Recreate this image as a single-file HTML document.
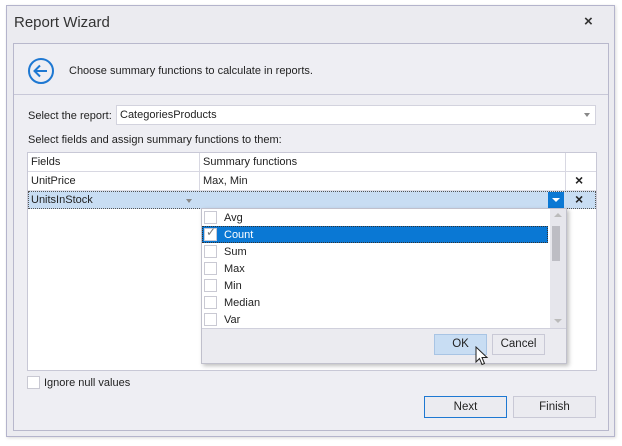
<!DOCTYPE html>
<html><head><meta charset="utf-8"><style>
*{box-sizing:border-box;margin:0;padding:0}
body{width:622px;height:446px;background:#fff;font-family:"Liberation Sans",sans-serif;font-size:11px;color:#222;position:relative;overflow:hidden}
.a{position:absolute}
.win{left:6px;top:5px;width:609px;height:432px;background:#ebebf0;border:1px solid #b4b4cc;box-shadow:1px 1px 3px rgba(0,0,0,.15)}
.panel{left:13px;top:43px;width:596px;height:388px;background:#eeeef3;border:1px solid #b8b8cc}
.cb{width:13px;height:13px;background:#fff;border:1px solid #c9c9d3}
.btn{border:1px solid #c9c9d6;background:#ebebf0;text-align:center;line-height:19px;font-size:11.5px}
</style></head><body>
<div class="a win"></div>
<div class="a" style="left:14px;top:14px;font-size:15px;color:#333">Report Wizard</div>
<div class="a" style="left:584px;top:13px;font-size:15px;font-weight:bold;color:#333">×</div>
<div class="a panel"></div>
<div class="a" style="left:14px;top:94px;width:594px;height:1px;background:#c8c8d8"></div>
<svg class="a" style="left:27px;top:57px" width="28" height="28" viewBox="0 0 28 28"><circle cx="14" cy="14" r="12" fill="none" stroke="#1e78d2" stroke-width="2"/><path d="M20 14H8M13 8.5L7.5 14L13 19.5" fill="none" stroke="#1e78d2" stroke-width="2"/></svg>
<div class="a" style="left:69px;top:65px">Choose summary functions to calculate in reports.</div>
<div class="a" style="left:28px;top:110px">Select the report:</div>
<div class="a" style="left:116px;top:105px;width:480px;height:20px;background:#fff;border:1px solid #d3d3de;padding:3px 3px">CategoriesProducts</div>
<div class="a" style="left:584px;top:113px;border:3.5px solid transparent;border-top:4px solid #888"></div>
<div class="a" style="left:28px;top:134px">Select fields and assign summary functions to them:</div>
<div class="a" style="left:27px;top:152px;width:570px;height:219px;background:#fff;border:1px solid #c8c8d6"></div>
<div class="a" style="left:28px;top:153px;width:568px;height:19px;border-bottom:1px solid #d8d8e2"></div>
<div class="a" style="left:199px;top:153px;width:1px;height:38px;background:#d8d8e2"></div>
<div class="a" style="left:565px;top:153px;width:1px;height:38px;background:#d8d8e2"></div>
<div class="a" style="left:31px;top:156px">Fields</div>
<div class="a" style="left:203px;top:156px">Summary functions</div>
<div class="a" style="left:28px;top:190px;width:568px;height:1px;background:#e0e0e8"></div>
<div class="a" style="left:31px;top:175px">UnitPrice</div>
<div class="a" style="left:203px;top:175px">Max, Min</div>
<div class="a" style="left:575px;top:172px;font-weight:bold;font-size:14px">×</div>
<div class="a" style="left:28px;top:191px;width:568px;height:18px;background:#c8ddf3;border:1px dotted #555"></div>
<div class="a" style="left:31px;top:194px">UnitsInStock</div>
<div class="a" style="left:186px;top:199px;border:3.5px solid transparent;border-top:4px solid #888"></div>
<div class="a" style="left:548px;top:192px;width:16px;height:16px;background:#0a78d4"></div>
<div class="a" style="left:552px;top:198px;border:4px solid transparent;border-top:4px solid #fff"></div>
<div class="a" style="left:575px;top:191px;font-weight:bold;font-size:14px">×</div>
<div class="a" style="left:201px;top:208px;width:366px;height:156px;background:#fff;border:1px solid #c0c0cc;box-shadow:2px 2px 4px rgba(0,0,0,.25)"></div>
<div class="a" style="left:550px;top:209px;width:16px;height:119px;background:#e6e6ec"></div>
<div class="a" style="left:552px;top:226px;width:8px;height:35px;background:#bdbdc4"></div>
<div class="a" style="left:554px;top:213px;border:4px solid transparent;border-bottom:4px solid #bbb;border-top:0"></div>
<div class="a" style="left:554px;top:319px;border:4px solid transparent;border-top:4px solid #bbb;border-bottom:0"></div>
<div class="a" style="left:202px;top:226px;width:346px;height:17px;background:#0a78d4;border:1px dotted #333"></div>
<div class="a cb" style="left:204px;top:211px"></div><div class="a" style="left:224px;top:212px">Avg</div>
<div class="a cb" style="left:204px;top:228px"></div><div class="a" style="left:206px;top:225px;color:#777;font-size:12px">✓</div><div class="a" style="left:224px;top:229px;color:#fff">Count</div>
<div class="a cb" style="left:204px;top:245px"></div><div class="a" style="left:224px;top:246px">Sum</div>
<div class="a cb" style="left:204px;top:262px"></div><div class="a" style="left:224px;top:263px">Max</div>
<div class="a cb" style="left:204px;top:279px"></div><div class="a" style="left:224px;top:280px">Min</div>
<div class="a cb" style="left:204px;top:296px"></div><div class="a" style="left:224px;top:297px">Median</div>
<div class="a cb" style="left:204px;top:313px"></div><div class="a" style="left:224px;top:314px">Var</div>
<div class="a" style="left:202px;top:328px;width:364px;height:35px;background:#ebebf0;border-top:1px solid #d0d0dc"></div>
<div class="a btn" style="left:434px;top:334px;width:53px;height:21px;background:#c8ddf3;border-color:#a8c4e4">OK</div>
<div class="a btn" style="left:492px;top:334px;width:53px;height:21px">Cancel</div>
<svg class="a" style="left:475px;top:346px" width="14" height="20" viewBox="0 0 14 20"><path d="M1 1V16L4.5 12.5L7 18.5L9.5 17.5L7 11.5H12Z" fill="#fff" stroke="#222" stroke-width="1"/></svg>
<div class="a cb" style="left:27px;top:376px"></div>
<div class="a" style="left:44px;top:377px">Ignore null values</div>
<div class="a btn" style="left:424px;top:396px;width:83px;height:22px;border-color:#1e78d2;line-height:20px">Next</div>
<div class="a btn" style="left:513px;top:396px;width:83px;height:22px;line-height:20px">Finish</div>
</body></html>
